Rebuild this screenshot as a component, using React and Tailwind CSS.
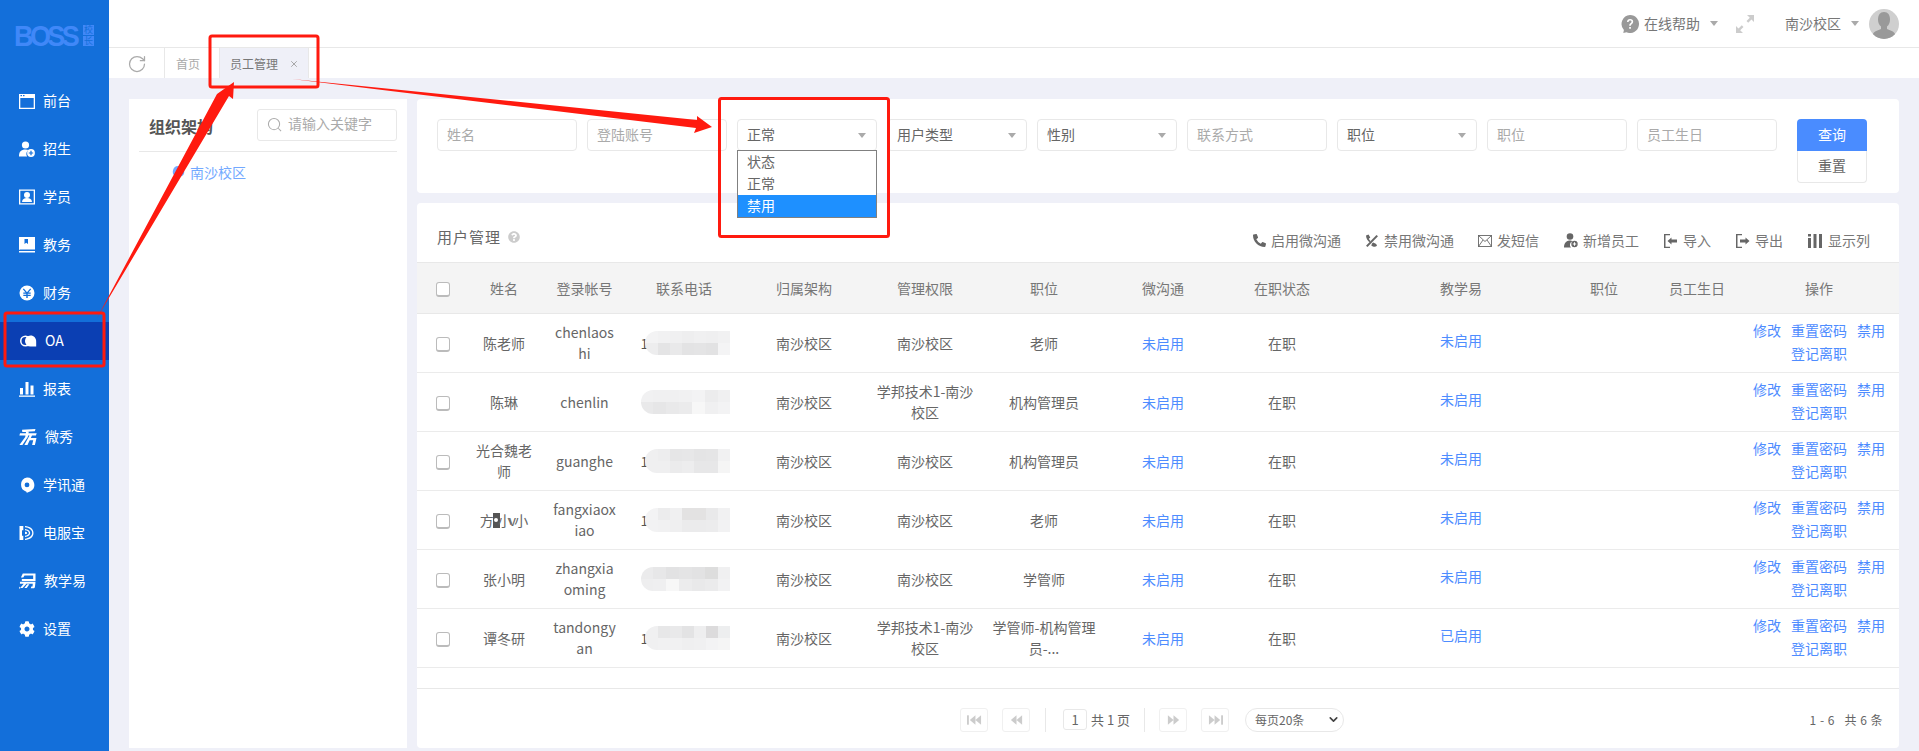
import React from 'react';
import { RotateCw, X, ChevronDown } from 'lucide-react';
import { FaCog, FaPhoneAlt, FaQuestionCircle } from 'react-icons/fa';

const I = ({ children, className = 'w-4', vb = '0 0 16 16' }) => (
  <svg viewBox={vb} className={`h-4 shrink-0 ${className}`} fill="currentColor">{children}</svg>
);

const navIcons = {
  qt: <I><path fillRule="evenodd" d="M0 1h16v15H0zM1.300 5v9.700h13.400V5z" /><rect x="1.500" y="2" width="1.500" height="1.200" fill="#136fda" /><rect x="4" y="2" width="1.500" height="1.200" fill="#136fda" /></I>,
  zs: <I><circle cx="6.500" cy="4" r="3.600" /><path d="M0 15.500c0-5 2-7 6.500-7 1.300 0 2.300.2 3 .6a4.500 4.500 0 0 0-1.400 6.400z" /><circle cx="12" cy="12" r="3.900" /><path d="M11.400 9.800h1.200v1.600h1.600v1.200h-1.600v1.600h-1.200v-1.600H9.800v-1.200h1.600z" fill="#136fda" /></I>,
  xy: <I><path fillRule="evenodd" d="M0 .5h16v15H0zm1.300 1.300v12.400h13.400V1.800z" /><circle cx="8" cy="6" r="3" /><path d="M3 13c.3-3 2-4 5-4s4.700 1 5 4z" /></I>,
  jw: <I><path d="M0 0h16v12.500H2.500c-1.500 0-1.500 0-2.500.5zM0 14h16v1.500H0z" /><path d="M5.500 2h3.500v5L7.250 5.700 5.500 7z" fill="#136fda" /></I>,
  cw: <I><circle cx="8" cy="8" r="7.500" /><path d="M4.800 3.500 8 7.200l3.200-3.700 1 .8L9.400 7.500h2.300v1.200H8.700v1h3v1.200h-3V13H7.300v-2.100h-3V9.700h3v-1h-3V7.500h2.300L3.800 4.300z" fill="#136fda" /></I>,
  oa: <I className="w-[18px]" vb="0 0 18 16"><path fillRule="evenodd" d="M6.500 2.500a5.500 5.500 0 1 1 0 11 5.500 5.500 0 0 1 0-11zm0 1.500a4 4 0 0 0 0 8c.7 0 1.200-.1 1.500-.4A6 6 0 0 1 8 4.400 3 3 0 0 0 6.500 4z" /><path d="M11.500 2.500c3.500 0 5.700 2.500 5.700 6.500v4.500h-5.700A5.500 5.500 0 0 1 11.500 2.500z" /></I>,
  bb: <I><rect x="1" y="7" width="3" height="6.500" /><rect x="6.500" y="1" width="3" height="12.500" /><rect x="11.500" y="4.500" width="3" height="9" /><rect x="0" y="14.500" width="16" height="1.300" /></I>,
  wx: <I className="w-[18px]" vb="0 0 18 16"><path d="M3 .8 16.500 0l-.7 2.200-12.500.9zM1 4.300h16.700l-.8 2.200H.4zM7.300 1.500h2.700L8.800 8 3.400 16H.4l5.800-8zM10.500 6.500h2.500L11.800 9H17.500l-1.600 7h-2.800l1.100-4.800h-3.500l-2.200 4.800H5.400z" /></I>,
  xxt: <I><path fillRule="evenodd" d="M8 .5a7.300 7.300 0 0 1 3.500 13.700L8 15.800c-.3 0-.3-.6-.6-1.100A7.300 7.300 0 0 1 8 .5zm0 5a2.400 2.400 0 1 0 0 4.800 2.400 2.400 0 0 0 0-4.800z" /></I>,
  dfb: <I><path d="M.5 1h3.800v4.300H3v5.400h1.300V15H.5z" /><path d="M6 1c5 .3 8.500 3 8.500 7S11 14.700 6 15v-1.300c4-.3 7.200-2.700 7.200-5.700S10 2.600 6 2.300zM6 4c2.700.2 5.200 1.700 5.200 4S8.700 11.800 6 12v-1.300c2-.2 3.900-1.100 3.900-2.700S8 5.500 6 5.300zM6 6.800c1 0 2.200.4 2.200 1.200S7 9.200 6 9.200z" /></I>,
  jxy: <I className="w-[17px]" vb="0 0 18 16"><path fillRule="evenodd" d="M4 0h13.500v8H3V5.800h12V2.300H5.800L4.500 4.300H2zM1 8.800h16.500l-.6 5.200c-.2 1.200-.8 1.800-1.800 1.800h-2.600l.5-2.100h1.300l.3-2.800H7.800L3.800 15.500H1.200L5 10.900H1z" /><path d="M8.700 11.500h2.300l-2.800 4H5.700zM0 13.800l1.500 2.100H0z" /></I>,
  sz: <FaCog className="w-4 h-4 shrink-0" />,
};

const nav = [
  ['前台', 'qt'], ['招生', 'zs'], ['学员', 'xy'], ['教务', 'jw'], ['财务', 'cw'], ['OA', 'oa'],
  ['报表', 'bb'], ['微秀', 'wx'], ['学讯通', 'xxt'], ['电服宝', 'dfb'], ['教学易', 'jxy'], ['设置', 'sz'],
];

function Sidebar() {
  return (
    <aside className="w-[109px] shrink-0 bg-[#136fda] text-white flex flex-col">
      <div className="h-[77px] flex items-start pl-[14px] pt-[23px] text-[#4088f8]">
        <span className="font-['Liberation_Sans',sans-serif] font-bold text-[30px] leading-[26px] tracking-[-4px] w-[69px] whitespace-nowrap origin-left scale-x-90">BOSS</span>
        <span className="flex flex-col gap-[1px] mt-[2px]">
          <span className="w-[11px] h-[10px] bg-[#4088f8] text-[#136fda] text-[9px] leading-[10px] text-center">校</span>
          <span className="w-[11px] h-[10px] bg-[#4088f8] text-[#136fda] text-[9px] leading-[10px] text-center">长</span>
        </span>
      </div>
      <nav className="flex flex-col">
        {nav.map(([label, key]) => (
          <div key={label} className="h-12 flex items-center">
            <div className={`h-[38px] w-full flex items-center pl-[19px] text-[14px] gap-2 ${label === 'OA' ? 'bg-[#0b3fb3]' : ''}`}>
              {navIcons[key]}
              <span className="leading-none pb-[2px]">{label}</span>
            </div>
          </div>
        ))}
      </nav>
    </aside>
  );
}

const Caret = ({ className = '' }) => (
  <span className={`w-0 h-0 border-x-[4px] border-x-transparent border-t-[5px] border-t-[#aaa] ${className}`} />
);

function TopBar() {
  return (
    <header className="h-12 shrink-0 border-b border-[#e8e8e8] bg-white flex items-center justify-end pr-5 text-[14px] text-[#777]">
      <svg viewBox="0 0 18 18" className="w-[18px] h-[18px] text-[#999]" fill="currentColor">
        <path d="M9 0a9 9 0 1 1-3.500 17.300L2.300 18l.6-3A9 9 0 0 1 9 0z" />
        <path d="M6 7c0-2 1.300-3 3.100-3 1.900 0 3.100 1.100 3.100 2.700 0 2.300-2.400 2.300-2.400 4H8.200c0-2.600 2.300-2.700 2.300-4 0-.7-.5-1.200-1.400-1.200-.9 0-1.400.5-1.500 1.500zM8.200 12h1.700v1.800H8.200z" fill="#fff" />
      </svg>
      <span className="ml-[5px]">在线帮助</span>
      <Caret className="ml-[10px]" />
      <svg viewBox="0 0 18 18" className="w-[18px] h-[18px] ml-[18px] text-[#ccc]" fill="currentColor">
        <path d="M11 0h7v7l-2.500-2.500-3.300 3.300-1.700-1.700 3.300-3.300zM7 18H0v-7l2.500 2.500 3.300-3.300 1.700 1.700-3.300 3.300z" />
      </svg>
      <span className="ml-[31px]">南沙校区</span>
      <Caret className="ml-[10px]" />
      <span className="ml-[10px] w-[30px] h-[30px] rounded-full bg-[#cfcfcf] overflow-hidden">
        <svg viewBox="0 0 30 30" className="w-full h-full text-[#999]" fill="currentColor">
          <path d="M15 3c4 0 6 3 6 7.500 0 3-1 5.500-3 7v2.500c3 1.500 7 2 8 5v5H4v-5c1-3 5-3.500 8-5v-2.500c-2-1.500-3-4-3-7C9 6 11 3 15 3z" />
        </svg>
      </span>
    </header>
  );
}

function Tabs() {
  return (
    <div className="h-[30px] shrink-0 bg-white flex items-stretch text-[12px] text-[#888]">
      <div className="w-[56px] flex items-center justify-center pt-[2px] border-r border-[#e8e8e8]">
        <RotateCw className="w-[20px] h-[20px] text-[#aaa]" strokeWidth={1.5} />
      </div>
      <div className="w-[54px] flex items-center pl-[11px] pt-[2px] text-[#aaa]">首页</div>
      <div className="w-[90px] flex items-center pl-[10px] pt-[2px] bg-[#eff0f8] border-x border-[#e8e8e8] text-[#777]">
        员工管理
        <X className="w-[10px] h-[10px] ml-[11px] text-[#999]" />
      </div>
    </div>
  );
}

function OrgPanel() {
  return (
    <section className="w-[278px] shrink-0 bg-white flex flex-col px-[10px]">
      <div className="h-[53px] border-b border-[#e8e8e8] flex items-center justify-between pl-[10px] pt-[8px] pb-[9px]">
        <span className="text-[16px] font-bold text-[#555] pt-[3px]">组织架构</span>
        <div className="w-[140px] h-[32px] border border-[#e8e8e8] rounded-[3px] flex items-center pl-[9px] gap-[6px]">
          <svg viewBox="0 0 16 16" className="w-[15px] h-[15px] text-[#aaa]" fill="none" stroke="currentColor" strokeWidth="1.100">
            <circle cx="7.500" cy="7.500" r="6" /><path d="m12 12 3 3" />
          </svg>
          <span className="text-[14px] text-[#aaa] pb-[2px]">请输入关键字</span>
        </div>
      </div>
      <div className="flex items-center pl-[33px] mt-[10px] h-5 text-[14px] text-[#73a9ff]">
        <svg viewBox="0 0 14 14" className="w-[13px] h-[13px]" fill="currentColor">
          <path fillRule="evenodd" d="M7 0a6 6 0 0 1 2 11.700L7 14l-2-2.300A6 6 0 0 1 7 0zm0 4a2 2 0 1 0 0 4 2 2 0 0 0 0-4z" />
        </svg>
        <span className="ml-[5px]">南沙校区</span>
      </div>
    </section>
  );
}

const inputCls = "w-[140px] h-8 shrink-0 border border-[#e8e8e8] rounded-[4px] pl-[9px] pr-[9px] pb-[2px] text-[14px] text-[#666] outline-none placeholder:text-[#aaa]";

const Select = ({ label, children }) => (
  <div className="relative w-[140px] h-8 shrink-0 border border-[#e8e8e8] rounded-[4px] pl-[9px] pr-[10px] text-[14px] text-[#666] flex items-center justify-between">
    <span className="pb-[1px]">{label}</span>
    <Caret />
    {children}
  </div>
);

function Filters() {
  return (
    <section className="h-[94px] shrink-0 bg-white rounded-[4px] pt-5 pl-5 flex">
      <div className="flex gap-[10px]">
        <input className={inputCls} placeholder="姓名" />
        <input className={inputCls} placeholder="登陆账号" />
        <Select label="正常">
          <div className="absolute -left-px top-[30px] w-[140px] border border-[#808080] bg-white leading-[20px]">
            <div className="h-[22px] pl-[9px]">状态</div>
            <div className="h-[22px] pl-[9px]">正常</div>
            <div className="h-[22px] pl-[9px] bg-[#1e90ff] text-white">禁用</div>
          </div>
        </Select>
        <Select label="用户类型" />
        <Select label="性别" />
        <input className={inputCls} placeholder="联系方式" />
        <Select label="职位" />
        <input className={inputCls} placeholder="职位" />
        <input className={inputCls} placeholder="员工生日" />
      </div>
      <div className="ml-5 w-[70px] flex flex-col text-[14px]">
        <button className="h-8 pb-[2px] bg-[#4a8cff] text-white rounded-t-[4px]">查询</button>
        <button className="h-8 pb-[2px] border border-t-0 border-[#e8e8e8] rounded-b-[4px] text-[#666]">重置</button>
      </div>
    </section>
  );
}

const tools = [
  ['启用微沟通', <FaPhoneAlt className="w-[13px] h-[13px]" />, 'ml-0'],
  ['禁用微沟通', (
    <svg viewBox="0 0 14 14" className="w-[14px] h-[14px]" fill="currentColor">
      <path d="M1 1.500 3.500.5l1.800 3-1.500 1.300c.5 1 1 1.700 1.700 2.300L4.400 8.200C2.500 6.500 1 4 1 1.500zM7 9.500l1.200-1.100 3 1.700.8 1.700c-1 1-2.300 1.200-3.300.9-1-.3-1.400-.5-2.400-1.200z" />
      <path d="M11.500 1 13 2.300 2.500 13 1 11.700z" />
    </svg>
  ), 'ml-[24px]'],
  ['发短信', (
    <svg viewBox="0 0 14 12" className="w-[14px] h-[12px]" fill="none" stroke="currentColor" strokeWidth="0.900">
      <rect x=".5" y=".5" width="13" height="11" /><path d="m.5.500 6.500 6 6.500-6M.5 11.500l4.500-6.500M13.500 11.500 9 5" />
    </svg>
  ), 'ml-[24px]'],
  ['新增员工', (
    <svg viewBox="0 0 14 15" className="w-[14px] h-[15px]" fill="currentColor">
      <circle cx="6" cy="3.500" r="3.300" /><path d="M0 14.500c.2-4 1.500-6.500 5.500-7 1.500 0 2.500.2 3 .7a3.800 3.800 0 0 0-1.500 6.300z" />
      <circle cx="10.500" cy="11" r="3.200" /><path d="M10 9.300h1v1.200h1.200v1H11v1.200h-1v-1.200H8.800v-1H10z" fill="#fff" />
    </svg>
  ), 'ml-[25px]'],
  ['导入', (
    <svg viewBox="0 0 14 14" className="w-[14px] h-[14px]" fill="currentColor">
      <path d="M0 0h6v1.300H1.500v11.400H6V14H0zM3.500 7 7.500 3.500V5.500H13v3H7.500v2z" />
    </svg>
  ), 'ml-[25px]'],
  ['导出', (
    <svg viewBox="0 0 14 14" className="w-[14px] h-[14px]" fill="currentColor">
      <path d="M0 0h6v1.300H1.500v11.400H6V14H0zM13.500 7 9.500 3.500V5.500H4v3h5.500v2z" />
    </svg>
  ), 'ml-[25px]'],
  ['显示列', (
    <svg viewBox="0 0 15 14" className="w-[15px] h-[14px]" fill="currentColor">
      <rect x="0" y="0" width="3" height="2.500" /><rect x="0" y="4" width="3" height="10" />
      <rect x="5.500" y="0" width="3" height="14" /><rect x="11" y="0" width="3" height="14" />
    </svg>
  ), 'ml-[25px]'],
];

const Mosaic = ({ colors, wide }) => (
  <span className={`relative grid grid-cols-7 h-6 overflow-hidden rounded-l-full ${wide ? 'w-[90px]' : 'w-[85px] -ml-[3px]'}`}>
    {colors.map((c, i) => <span key={i} style={{ backgroundColor: c }} />)}
  </span>
);

const rows = [
  { name: '陈老师', acc: 'chenlaoshi', org: '南沙校区', job: '老师', jxy: '未启用', m: ['#f3f3f4', '#f1f1f2', '#f0f0f1', '#eeeeef', '#f0f0f1', '#efeff0', '#f1f1f2', '#ededee', '#e4e4e5', '#e9e9ea', '#e3e3e4', '#e4e4e5', '#e2e2e3', '#f4f4f5'] },
  { name: '陈琳', acc: 'chenlin', org: '学邦技术1-南沙校区', job: '机构管理员', jxy: '未启用', wide: true, m: ['#f1f1f2', '#f0f0f1', '#f0f0f1', '#f1f1f2', '#f3f3f4', '#ececed', '#f0f0f1', '#e9e9ea', '#e6e6e7', '#e9e9ea', '#ebebec', '#f7f7f7', '#f0f0f1', '#f3f3f4'] },
  { name: '光合魏老师', acc: 'guanghe', org: '南沙校区', job: '机构管理员', jxy: '未启用', m: ['#efeff0', '#ededee', '#e6e6e7', '#e7e7e8', '#e4e4e5', '#e5e5e6', '#f1f1f2', '#efeff0', '#efeff0', '#ebebec', '#ededee', '#e7e7e8', '#e7e7e8', '#f5f5f5'] },
  { name: 'fang', acc: 'fangxiaoxiao', org: '南沙校区', job: '老师', jxy: '未启用', m: ['#f3f3f4', '#ececed', '#f0f0f1', '#e3e2e2', '#e3e2e2', '#e9e9ea', '#f1f1f2', '#f2f2f3', '#f1f1f2', '#efeff0', '#ebebec', '#ebebec', '#ececed', '#f2f2f3'] },
  { name: '张小明', acc: 'zhangxiaoming', org: '南沙校区', job: '学管师', jxy: '未启用', wide: true, m: ['#ebebec', '#e7e7e8', '#e2e2e3', '#e4e4e5', '#e2e2e3', '#dddddd', '#f0f0f1', '#eeeeef', '#efeff0', '#f7f7f7', '#ececed', '#e9e9ea', '#ebebec', '#f2f2f3'] },
  { name: '谭冬研', acc: 'tandongyan', org: '学邦技术1-南沙校区', job: '学管师-机构管理员-...', jxy: '已启用', m: ['#f0f0f1', '#e7e7e8', '#e9e9ea', '#e3e3e4', '#eeeeef', '#dcdbdc', '#edeeef', '#f0f0f1', '#f1f1f2', '#f1f1f2', '#efeff0', '#f0f0f1', '#f3f3f4', '#f5f5f5'] },
];

const Check = () => (
  <span className="block w-[14px] h-[15px] mx-auto mt-[2px] border border-[#bbb] border-b-2 rounded-[3px] bg-white" />
);

const headers = ['姓名', '登录帐号', '联系电话', '归属架构', '管理权限', '职位', '微沟通', '在职状态', '教学易'];

function Name({ row }) {
  if (row.name !== 'fang') return row.name;
  return (
    <span className="inline-flex items-center whitespace-nowrap">
      <span>方</span>
      <span className="w-[7px] h-[15px] -ml-px bg-[#555] flex items-center justify-center"><span className="w-1 h-1 rounded-full bg-white" /></span>
      <span className="-ml-[2px]">小</span>
      <span className="-ml-[3px]">v</span>
      <span className="-ml-[2px]">小</span>
    </span>
  );
}

function UserTable() {
  return (
    <table className="w-[1482px] table-fixed border-collapse text-[14px] leading-[21px] text-[#666] text-center">
      <colgroup>
        <col className="w-[52px]" /><col className="w-[70px]" /><col className="w-[91px]" /><col className="w-[108px]" />
        <col className="w-[132px]" /><col className="w-[110px]" /><col className="w-[128px]" /><col className="w-[110px]" />
        <col className="w-[128px]" /><col className="w-[230px]" /><col className="w-[79px]" /><col className="w-[84px]" /><col className="w-[160px]" />
      </colgroup>
      <thead>
        <tr className="h-[51px] bg-[#f4f4f4] border-y border-[#e8e8e8] text-[#777]">
          <th className="font-normal"><Check /></th>
          {headers.map((h, i) => <th key={i} className="font-normal">{h}</th>)}
          <th className="font-normal pr-[23px]">职位</th>
          <th className="font-normal">员工生日</th>
          <th className="font-normal">操作</th>
        </tr>
      </thead>
      <tbody>
        {rows.map(r => (
          <tr key={r.acc} className="h-[59px] border-b border-[#ebebeb]">
            <td><Check /></td>
            <td className="px-[6px] break-all"><Name row={r} /></td>
            <td className="break-all px-[13px]">{r.acc}</td>
            <td>
              <span className="flex items-center justify-center pl-[3px] text-[#555]">
                {r.wide ? null : <span>1</span>}
                <Mosaic colors={r.m} wide={r.wide} />
              </span>
            </td>
            <td>南沙校区</td>
            <td className="px-[6px]">{r.org}</td>
            <td className="px-[10px]">{r.job}</td>
            <td className="text-[#4e8cff]">未启用</td>
            <td>在职</td>
            <td className="text-[#4e8cff] pb-[6px]">{r.jxy}</td>
            <td />
            <td />
            <td className="pb-[2px]">
              <div className="w-[140px] mx-auto flex flex-wrap justify-center gap-x-[10px] text-[#4e8cff] leading-[23px]">
                <span>修改</span><span>重置密码</span><span>禁用</span><span>登记离职</span>
              </div>
            </td>
          </tr>
        ))}
      </tbody>
    </table>
  );
}

const PageBtn = ({ children }) => (
  <span className="w-7 h-6 border border-[#f0f0f0] rounded-[3px] flex items-center justify-center text-[#ccc]">
    <svg viewBox="0 0 16 12" className="w-[15px] h-[12px]" fill="currentColor">{children}</svg>
  </span>
);

function Pager() {
  return (
    <div className="h-[60px] pt-[2px] flex items-center border-t border-[#e8e8e8] text-[#666] text-[13px]">
      <div className="ml-[543px] flex items-center">
        <PageBtn><rect x="0" y="1" width="2" height="10" /><path d="M9 1v10L3 6zM15 1v10L9 6z" /></PageBtn>
        <span className="ml-[14px]"><PageBtn><path d="M8 1v10L2 6zM14 1v10L8 6z" /></PageBtn></span>
        <span className="ml-[15px] w-px h-6 bg-[#e8e8e8]" />
        <span className="ml-[17px] w-6 h-[21px] border border-[#e8e8e8] rounded-[3px] flex items-center justify-center">1</span>
        <span className="ml-[4px] w-[40px] whitespace-nowrap">共 1 页</span>
        <span className="ml-[13px] w-px h-6 bg-[#e8e8e8]" />
        <span className="ml-[14px]"><PageBtn><path d="M2 1v10l6-5zM8 1v10l6-5z" /></PageBtn></span>
        <span className="ml-[14px]"><PageBtn><path d="M1 1v10l6-5zM7 1v10l6-5z" /><rect x="14" y="1" width="2" height="10" /></PageBtn></span>
        <span className="ml-[16px] w-[99px] h-6 border border-[#e8e8e8] rounded-full flex items-center justify-between pl-[9px] pr-[3px] text-[12px]">
          每页20条
          <ChevronDown className="w-[13px] h-[13px] text-[#444]" strokeWidth={3} />
        </span>
      </div>
      <span className="ml-auto mr-[16px] text-[12px] whitespace-pre tracking-[0.5px]">1 - 6   共 6 条</span>
    </div>
  );
}

function TablePanel() {
  return (
    <section className="flex-1 bg-white rounded-[4px] flex flex-col overflow-hidden">
      <div className="h-[59px] shrink-0 flex items-center pl-5 pr-[29px]">
        <span className="text-[15px] tracking-[1px] text-[#666] mt-[9px]">用户管理</span>
        <FaQuestionCircle className="w-3 h-3 ml-[7px] mt-[9px] text-[#ccc]" />
        <div className="ml-auto flex items-center text-[14px] text-[#777] pt-[16px]">
          {tools.map(([label, icon, m]) => (
            <span key={label} className={`flex items-center gap-[5px] ${m}`}>
              <span className="text-[#666] flex">{icon}</span>
              {label}
            </span>
          ))}
        </div>
      </div>
      <UserTable />
      <div className="flex-1" />
      <Pager />
    </section>
  );
}

function Annotations() {
  return (
    <svg className="absolute inset-0 w-[1919px] h-[751px] pointer-events-none" viewBox="0 0 1919 751">
      <g fill="none" stroke="#ff1a0f" strokeWidth="3">
        <rect x="210" y="36" width="108" height="51" rx="2" />
        <rect x="5" y="313" width="99" height="53" rx="2" />
        <rect x="719.500" y="98.500" width="169" height="138" rx="2" />
      </g>
      <g fill="#ff1a0f">
        <path d="M97 318 217 94 234 82 233 99 229 96z" />
        <path d="M292 79 697 120 697 116 712 127 694 133 696 128z" />
      </g>
    </svg>
  );
}

export default function App() {
  return (
    <div className="relative flex h-[751px] w-[1919px] overflow-hidden bg-[#eff0f8] font-['Noto_Sans_CJK_SC','Noto_Sans',sans-serif]">
      <Sidebar />
      <div className="flex-1 min-w-0 flex flex-col">
        <TopBar />
        <Tabs />
        <main className="flex-1 min-h-0 flex gap-[10px] pt-[21px] pb-[3px] px-5">
          <OrgPanel />
          <div className="flex-1 min-w-0 flex flex-col gap-[10px]">
            <Filters />
            <TablePanel />
          </div>
        </main>
      </div>
      <Annotations />
    </div>
  );
}
